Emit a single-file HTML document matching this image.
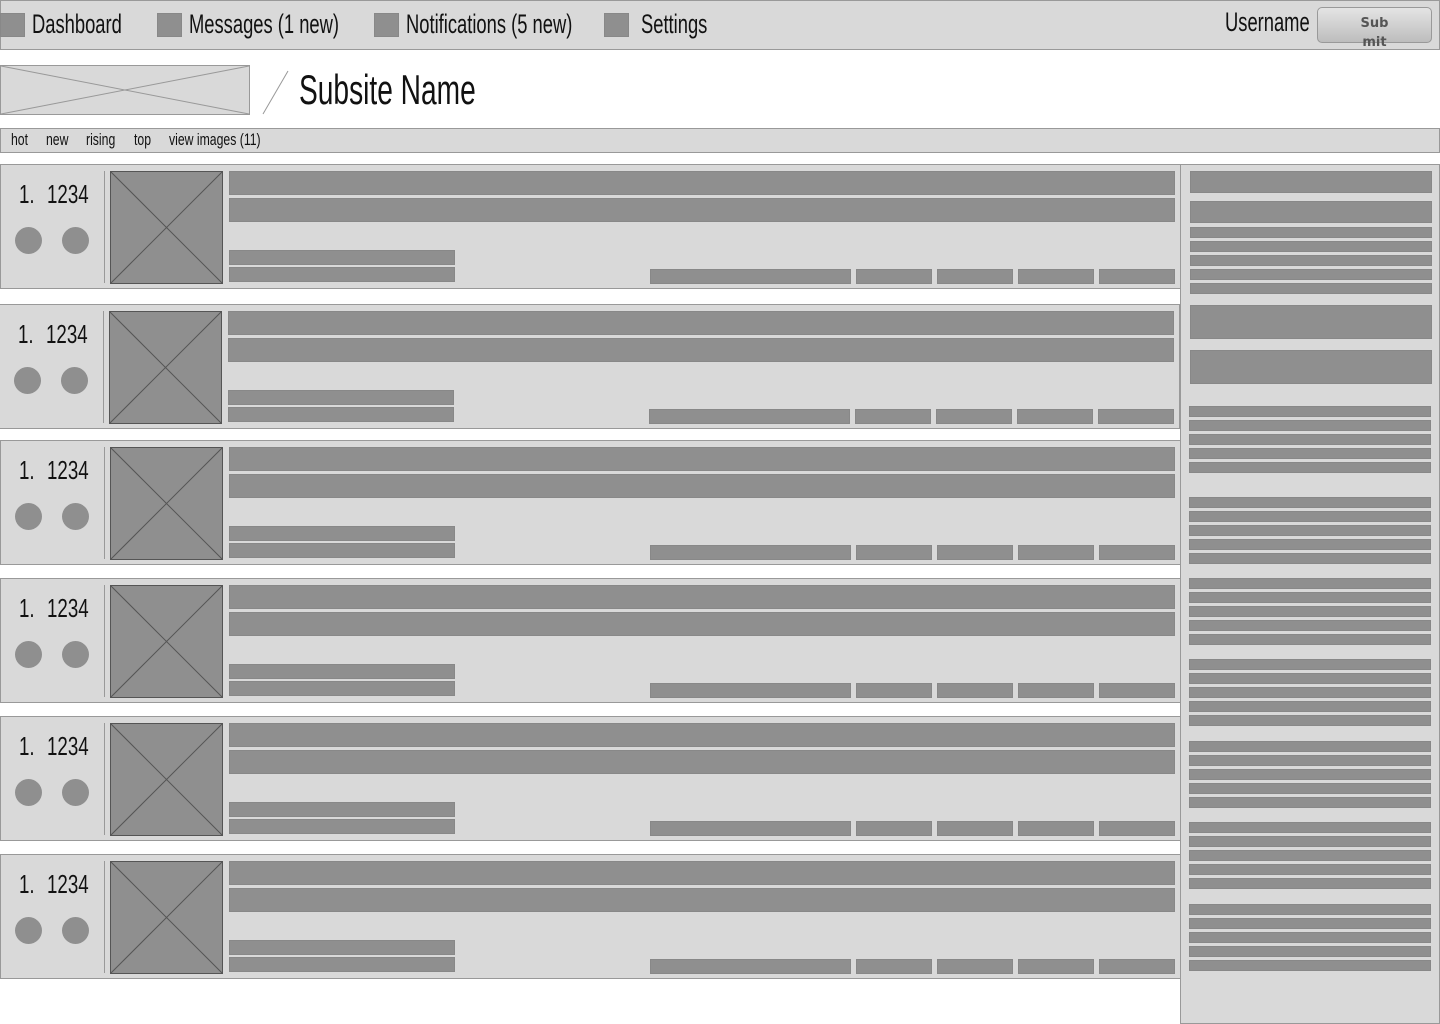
<!DOCTYPE html>
<html><head><meta charset="utf-8"><style>
*{margin:0;padding:0;box-sizing:border-box}
body{width:1440px;height:1024px;position:relative;background:#fff;overflow:hidden;font-family:"Liberation Sans",sans-serif;color:#111}
.a{position:absolute}
.b{position:absolute;background:#8f8f8f;border:1px solid #888}
.nav{left:0;top:0;width:1440px;height:50px;background:#d9d9d9;border:1px solid #999}
.sq{position:absolute;top:13px;width:25px;height:24px;background:#8f8f8f;border:1px solid #888}
.nt{position:absolute;top:9px;font-size:27px;transform:scaleX(.68);transform-origin:left;white-space:nowrap}
.tb{position:absolute;top:130px;font-size:17px;transform:scaleX(.72);transform-origin:left;white-space:nowrap}
.row{position:absolute;left:0;width:1181px;height:125px;background:#d9d9d9;border:1px solid #999}
.n{position:absolute;top:14px;font-size:26px;transform:scaleX(.72);transform-origin:left;white-space:nowrap}
.c{position:absolute;top:62px;width:27px;height:27px;border-radius:50%;background:#8f8f8f}
.dv{position:absolute;left:103px;top:6px;width:1px;height:112px;background:#999}
.th{position:absolute;left:109px;top:6px;width:113px;height:113px;background:#8f8f8f;border:1px solid #555}
.sb{position:absolute;left:1180px;top:164px;width:260px;height:860px;background:#d9d9d9;border:1px solid #999}
</style></head><body>
<div class="a nav"></div>
<div class="sq" style="left:0"></div><div class="nt" style="left:32px">Dashboard</div>
<div class="sq" style="left:157px"></div><div class="nt" style="left:189px">Messages (1 new)</div>
<div class="sq" style="left:374px"></div><div class="nt" style="left:406px">Notifications (5 new)</div>
<div class="sq" style="left:604px"></div><div class="nt" style="left:641px">Settings</div>
<div class="nt" style="left:1225px;top:7px">Username</div>
<div class="a" style="left:1317px;top:7px;width:115px;height:36px;border:1px solid #999;border-radius:5px;background:linear-gradient(#e4e4e4,#bdbdbd);font-family:'DejaVu Sans',sans-serif;font-weight:bold;font-size:13px;color:#555;text-align:center;line-height:19px;padding-top:6px;overflow:visible">Sub<br>mit</div>

<svg class="a" style="left:0;top:65px" width="300" height="52">
<rect x="0.5" y="0.5" width="249" height="49" fill="#d9d9d9" stroke="#999"/>
<line x1="1" y1="1" x2="249" y2="49" stroke="#999"/><line x1="1" y1="49" x2="249" y2="1" stroke="#999"/>
<line x1="263" y1="49" x2="288" y2="6" stroke="#999"/>
</svg>
<div class="a" style="left:299px;top:66px;font-size:42px;transform:scaleX(.67);transform-origin:left;white-space:nowrap">Subsite Name</div>

<div class="a" style="left:0;top:128px;width:1440px;height:25px;background:#d9d9d9;border:1px solid #999"></div>
<div class="tb" style="left:11px">hot</div><div class="tb" style="left:46px">new</div><div class="tb" style="left:86px">rising</div><div class="tb" style="left:134px">top</div><div class="tb" style="left:169px">view images (11)</div>

<div class="sb"></div>
<div class="b" style="left:1190px;top:171px;width:242px;height:22px"></div>
<div class="b" style="left:1190px;top:201px;width:242px;height:22px"></div>
<div class="b" style="left:1190px;top:227px;width:242px;height:11px"></div>
<div class="b" style="left:1190px;top:241px;width:242px;height:11px"></div>
<div class="b" style="left:1190px;top:255px;width:242px;height:11px"></div>
<div class="b" style="left:1190px;top:269px;width:242px;height:11px"></div>
<div class="b" style="left:1190px;top:283px;width:242px;height:11px"></div>
<div class="b" style="left:1190px;top:305px;width:242px;height:34px"></div>
<div class="b" style="left:1190px;top:350px;width:242px;height:34px"></div>
<div class="b" style="left:1189px;top:406px;width:242px;height:11px"></div><div class="b" style="left:1189px;top:420px;width:242px;height:11px"></div><div class="b" style="left:1189px;top:434px;width:242px;height:11px"></div><div class="b" style="left:1189px;top:448px;width:242px;height:11px"></div><div class="b" style="left:1189px;top:462px;width:242px;height:11px"></div>
<div class="b" style="left:1189px;top:497px;width:242px;height:11px"></div><div class="b" style="left:1189px;top:511px;width:242px;height:11px"></div><div class="b" style="left:1189px;top:525px;width:242px;height:11px"></div><div class="b" style="left:1189px;top:539px;width:242px;height:11px"></div><div class="b" style="left:1189px;top:553px;width:242px;height:11px"></div>
<div class="b" style="left:1189px;top:578px;width:242px;height:11px"></div><div class="b" style="left:1189px;top:592px;width:242px;height:11px"></div><div class="b" style="left:1189px;top:606px;width:242px;height:11px"></div><div class="b" style="left:1189px;top:620px;width:242px;height:11px"></div><div class="b" style="left:1189px;top:634px;width:242px;height:11px"></div>
<div class="b" style="left:1189px;top:659px;width:242px;height:11px"></div><div class="b" style="left:1189px;top:673px;width:242px;height:11px"></div><div class="b" style="left:1189px;top:687px;width:242px;height:11px"></div><div class="b" style="left:1189px;top:701px;width:242px;height:11px"></div><div class="b" style="left:1189px;top:715px;width:242px;height:11px"></div>
<div class="b" style="left:1189px;top:741px;width:242px;height:11px"></div><div class="b" style="left:1189px;top:755px;width:242px;height:11px"></div><div class="b" style="left:1189px;top:769px;width:242px;height:11px"></div><div class="b" style="left:1189px;top:783px;width:242px;height:11px"></div><div class="b" style="left:1189px;top:797px;width:242px;height:11px"></div>
<div class="b" style="left:1189px;top:822px;width:242px;height:11px"></div><div class="b" style="left:1189px;top:836px;width:242px;height:11px"></div><div class="b" style="left:1189px;top:850px;width:242px;height:11px"></div><div class="b" style="left:1189px;top:864px;width:242px;height:11px"></div><div class="b" style="left:1189px;top:878px;width:242px;height:11px"></div>
<div class="b" style="left:1189px;top:904px;width:242px;height:11px"></div><div class="b" style="left:1189px;top:918px;width:242px;height:11px"></div><div class="b" style="left:1189px;top:932px;width:242px;height:11px"></div><div class="b" style="left:1189px;top:946px;width:242px;height:11px"></div><div class="b" style="left:1189px;top:960px;width:242px;height:11px"></div>

<div class="row" style="top:164px"><div class="n" style="left:18px">1.</div><div class="n" style="left:46px">1234</div><div class="c" style="left:14px"></div><div class="c" style="left:61px"></div><div class="dv"></div><svg class="th" viewBox="0 0 112 112" preserveAspectRatio="none"><line x1="0" y1="0" x2="112" y2="112" stroke="#555"/><line x1="0" y1="112" x2="112" y2="0" stroke="#555"/></svg><div class="b" style="left:228px;top:6px;width:946px;height:24px"></div><div class="b" style="left:228px;top:33px;width:946px;height:24px"></div><div class="b" style="left:228px;top:85px;width:226px;height:15px"></div><div class="b" style="left:228px;top:102px;width:226px;height:15px"></div><div class="b" style="left:649px;top:104px;width:201px;height:15px"></div><div class="b" style="left:855px;top:104px;width:76px;height:15px"></div><div class="b" style="left:936px;top:104px;width:76px;height:15px"></div><div class="b" style="left:1017px;top:104px;width:76px;height:15px"></div><div class="b" style="left:1098px;top:104px;width:76px;height:15px"></div></div>

<div class="row" style="top:304px;left:-1px"><div class="n" style="left:18px">1.</div><div class="n" style="left:46px">1234</div><div class="c" style="left:14px"></div><div class="c" style="left:61px"></div><div class="dv"></div><svg class="th" viewBox="0 0 112 112" preserveAspectRatio="none"><line x1="0" y1="0" x2="112" y2="112" stroke="#555"/><line x1="0" y1="112" x2="112" y2="0" stroke="#555"/></svg><div class="b" style="left:228px;top:6px;width:946px;height:24px"></div><div class="b" style="left:228px;top:33px;width:946px;height:24px"></div><div class="b" style="left:228px;top:85px;width:226px;height:15px"></div><div class="b" style="left:228px;top:102px;width:226px;height:15px"></div><div class="b" style="left:649px;top:104px;width:201px;height:15px"></div><div class="b" style="left:855px;top:104px;width:76px;height:15px"></div><div class="b" style="left:936px;top:104px;width:76px;height:15px"></div><div class="b" style="left:1017px;top:104px;width:76px;height:15px"></div><div class="b" style="left:1098px;top:104px;width:76px;height:15px"></div></div>

<div class="row" style="top:440px"><div class="n" style="left:18px">1.</div><div class="n" style="left:46px">1234</div><div class="c" style="left:14px"></div><div class="c" style="left:61px"></div><div class="dv"></div><svg class="th" viewBox="0 0 112 112" preserveAspectRatio="none"><line x1="0" y1="0" x2="112" y2="112" stroke="#555"/><line x1="0" y1="112" x2="112" y2="0" stroke="#555"/></svg><div class="b" style="left:228px;top:6px;width:946px;height:24px"></div><div class="b" style="left:228px;top:33px;width:946px;height:24px"></div><div class="b" style="left:228px;top:85px;width:226px;height:15px"></div><div class="b" style="left:228px;top:102px;width:226px;height:15px"></div><div class="b" style="left:649px;top:104px;width:201px;height:15px"></div><div class="b" style="left:855px;top:104px;width:76px;height:15px"></div><div class="b" style="left:936px;top:104px;width:76px;height:15px"></div><div class="b" style="left:1017px;top:104px;width:76px;height:15px"></div><div class="b" style="left:1098px;top:104px;width:76px;height:15px"></div></div>

<div class="row" style="top:578px"><div class="n" style="left:18px">1.</div><div class="n" style="left:46px">1234</div><div class="c" style="left:14px"></div><div class="c" style="left:61px"></div><div class="dv"></div><svg class="th" viewBox="0 0 112 112" preserveAspectRatio="none"><line x1="0" y1="0" x2="112" y2="112" stroke="#555"/><line x1="0" y1="112" x2="112" y2="0" stroke="#555"/></svg><div class="b" style="left:228px;top:6px;width:946px;height:24px"></div><div class="b" style="left:228px;top:33px;width:946px;height:24px"></div><div class="b" style="left:228px;top:85px;width:226px;height:15px"></div><div class="b" style="left:228px;top:102px;width:226px;height:15px"></div><div class="b" style="left:649px;top:104px;width:201px;height:15px"></div><div class="b" style="left:855px;top:104px;width:76px;height:15px"></div><div class="b" style="left:936px;top:104px;width:76px;height:15px"></div><div class="b" style="left:1017px;top:104px;width:76px;height:15px"></div><div class="b" style="left:1098px;top:104px;width:76px;height:15px"></div></div>

<div class="row" style="top:716px"><div class="n" style="left:18px">1.</div><div class="n" style="left:46px">1234</div><div class="c" style="left:14px"></div><div class="c" style="left:61px"></div><div class="dv"></div><svg class="th" viewBox="0 0 112 112" preserveAspectRatio="none"><line x1="0" y1="0" x2="112" y2="112" stroke="#555"/><line x1="0" y1="112" x2="112" y2="0" stroke="#555"/></svg><div class="b" style="left:228px;top:6px;width:946px;height:24px"></div><div class="b" style="left:228px;top:33px;width:946px;height:24px"></div><div class="b" style="left:228px;top:85px;width:226px;height:15px"></div><div class="b" style="left:228px;top:102px;width:226px;height:15px"></div><div class="b" style="left:649px;top:104px;width:201px;height:15px"></div><div class="b" style="left:855px;top:104px;width:76px;height:15px"></div><div class="b" style="left:936px;top:104px;width:76px;height:15px"></div><div class="b" style="left:1017px;top:104px;width:76px;height:15px"></div><div class="b" style="left:1098px;top:104px;width:76px;height:15px"></div></div>

<div class="row" style="top:854px"><div class="n" style="left:18px">1.</div><div class="n" style="left:46px">1234</div><div class="c" style="left:14px"></div><div class="c" style="left:61px"></div><div class="dv"></div><svg class="th" viewBox="0 0 112 112" preserveAspectRatio="none"><line x1="0" y1="0" x2="112" y2="112" stroke="#555"/><line x1="0" y1="112" x2="112" y2="0" stroke="#555"/></svg><div class="b" style="left:228px;top:6px;width:946px;height:24px"></div><div class="b" style="left:228px;top:33px;width:946px;height:24px"></div><div class="b" style="left:228px;top:85px;width:226px;height:15px"></div><div class="b" style="left:228px;top:102px;width:226px;height:15px"></div><div class="b" style="left:649px;top:104px;width:201px;height:15px"></div><div class="b" style="left:855px;top:104px;width:76px;height:15px"></div><div class="b" style="left:936px;top:104px;width:76px;height:15px"></div><div class="b" style="left:1017px;top:104px;width:76px;height:15px"></div><div class="b" style="left:1098px;top:104px;width:76px;height:15px"></div></div>
</body></html>
